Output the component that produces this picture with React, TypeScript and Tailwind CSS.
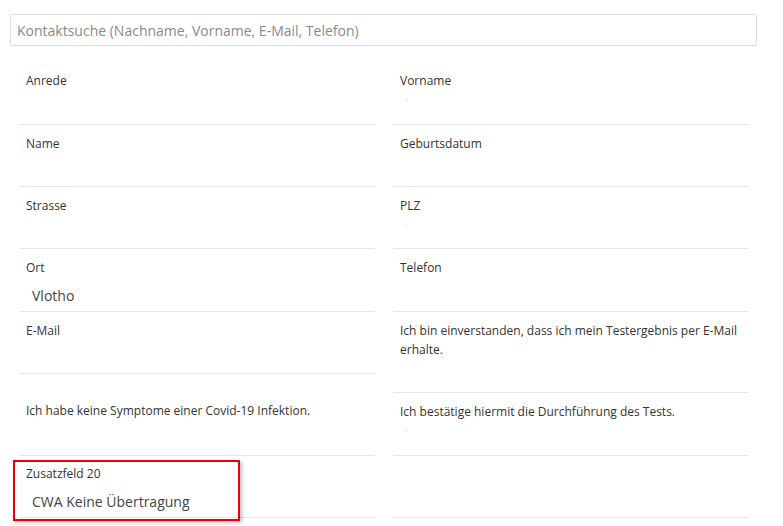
import React from "react";

type Cell = { label: string; value?: string; h: number; pt?: number; mark?: boolean; highlight?: boolean };

const left: Cell[] = [
  { label: "Anrede", h: 63 },
  { label: "Name", h: 62 },
  { label: "Strasse", h: 62 },
  { label: "Ort", value: "Vlotho", h: 63 },
  { label: "E-Mail", h: 62 },
  { label: "Ich habe keine Symptome einer Covid-19 Infektion.", h: 82, pt: 27 },
  { label: "Zusatzfeld 20", value: "CWA Keine Übertragung", h: 62, pt: 8, highlight: true },
];

const right: Cell[] = [
  { label: "Vorname", h: 63, mark: true },
  { label: "Geburtsdatum", h: 62 },
  { label: "PLZ", h: 62, mark: true },
  { label: "Telefon", h: 63 },
  { label: "Ich bin einverstanden, dass ich mein Testergebnis per E-Mail erhalte.", h: 81 },
  { label: "Ich bestätige hiermit die Durchführung des Tests.", h: 63, mark: true },
  { label: "", h: 62 },
];

function FieldCell({ c }: { c: Cell }) {
  return (
    <div
      className="relative border-b border-[#e6e6e6] px-[7px]"
      style={{ height: c.h, paddingTop: c.pt ?? 9 }}
    >
      {c.label && <div className="text-[12px] leading-[19px] text-[#333]">{c.label}</div>}
      {c.value && <div className="mt-[9px] pl-[6px] text-[14px] leading-[20px] text-[#444]">{c.value}</div>}
      {c.mark && <div className="mt-[8px] ml-[6px] h-[3px] w-px bg-[#e8e8e8]" />}
      {c.highlight && (
        <div className="pointer-events-none absolute left-[-6px] right-[135px] top-[4px] bottom-[-4px] border-2 border-[#e8000b] shadow-[2px_2px_4px_rgba(0,0,0,0.25)]" />
      )}
    </div>
  );
}

export default function App() {
  return (
    <div className="h-[526px] w-[783px] bg-white" style={{ fontFamily: '"Open Sans", "Noto Sans", sans-serif' }}>
      <div className="pl-[10px] pr-[26px] pt-[14px]">
        <div className="flex h-[32px] items-center rounded-[2px] border border-[#e0e0e0] px-[6px] text-[14px] text-[#8a8a8a]">
          Kontaktsuche (Nachname, Vorname, E-Mail, Telefon)
        </div>
      </div>
      <div className="mt-[16px] grid grid-cols-[356px_356px] gap-x-[18px] pl-[19px]">
        <div className="flex flex-col">
          {left.map((c, i) => (
            <FieldCell key={i} c={c} />
          ))}
        </div>
        <div className="flex flex-col">
          {right.map((c, i) => (
            <FieldCell key={i} c={c} />
          ))}
        </div>
      </div>
    </div>
  );
}
